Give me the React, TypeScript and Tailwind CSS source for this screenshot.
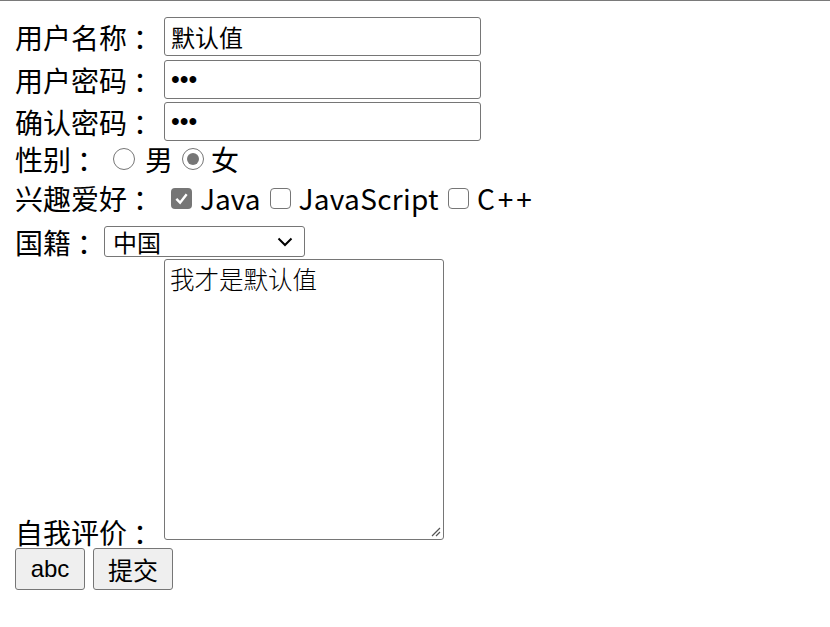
import React from 'react';

const cjk = '"Noto Sans CJK SC", "Noto Sans", sans-serif';

function Radio({ checked }: { checked?: boolean }) {
  return (
    <span className="w-[22px] h-[22px] rounded-full border-[1.5px] border-[#767676] bg-white flex items-center justify-center shrink-0">
      {checked && <span className="w-[12px] h-[12px] rounded-full bg-[#767676]" />}
    </span>
  );
}

function Check({ checked }: { checked?: boolean }) {
  return checked ? (
    <span className="w-[21px] h-[21px] rounded-[4px] bg-[#767676] flex items-center justify-center shrink-0">
      <svg width="15" height="15" viewBox="0 0 16 16">
        <path d="M2.5 8.5 L6.5 12.5 L13.5 3.5" fill="none" stroke="white" strokeWidth="2.6" />
      </svg>
    </span>
  ) : (
    <span className="block w-[21px] h-[21px] rounded-[4px] border-[1.5px] border-[#767676] bg-white shrink-0" />
  );
}

// 冒号在思源黑体里偏左，补一点距离
const Colon = () => <span className="ml-[6px]">：</span>;

export default function App() {
  return (
    <div className="w-[830px] h-[627px] bg-white text-black overflow-hidden" style={{ fontFamily: cjk }}>
      <div className="h-px bg-[#7a7a7a]" />
      <form className="pl-[15px] flex flex-col text-[28px] leading-none">
        {/* 用户名称 */}
        <div className="mt-[16px] flex items-center h-[39px]">
          <label className="w-[149px] shrink-0 whitespace-nowrap">用户名称<Colon /></label>
          <input
            type="text"
            defaultValue="默认值"
            className="w-[317px] h-[39px] border border-[#767676] rounded-[3px] pl-[6px] text-[24px] outline-none"
            style={{ fontFamily: cjk }}
          />
        </div>
        {/* 用户密码 */}
        <div className="mt-[4px] flex items-center h-[39px]">
          <label className="w-[149px] shrink-0 whitespace-nowrap">用户密码<Colon /></label>
          <input
            type="password"
            defaultValue="123"
            className="w-[317px] h-[39px] border border-[#767676] rounded-[3px] pl-[6px] text-[25px] outline-none"
            style={{ fontFamily: '"Liberation Sans", sans-serif' }}
          />
        </div>
        {/* 确认密码 */}
        <div className="mt-[3px] flex items-center h-[39px]">
          <label className="w-[149px] shrink-0 whitespace-nowrap">确认密码<Colon /></label>
          <input
            type="password"
            defaultValue="123"
            className="w-[317px] h-[39px] border border-[#767676] rounded-[3px] pl-[6px] text-[25px] outline-none"
            style={{ fontFamily: '"Liberation Sans", sans-serif' }}
          />
        </div>
        {/* 性别 */}
        <div className="flex items-center h-[36px]">
          <span className="w-[98px] shrink-0 whitespace-nowrap">性别<Colon /></span>
          <Radio />
          <span className="ml-[10px]">男</span>
          <span className="ml-[9px]"><Radio checked /></span>
          <span className="ml-[7px]">女</span>
        </div>
        {/* 兴趣爱好 */}
        <div className="flex items-center h-[42px]">
          <span className="w-[156px] shrink-0 whitespace-nowrap">兴趣爱好<Colon /></span>
          <Check checked />
          <span className="ml-[8px]">Java</span>
          <span className="ml-[10px]"><Check /></span>
          <span className="ml-[7px] tracking-[0.3px]">JavaScript</span>
          <span className="ml-[9px]"><Check /></span>
          <span className="ml-[8px] tracking-[3px]">C++</span>
        </div>
        {/* 国籍 */}
        <div className="mt-[7px] flex items-center h-[31px]">
          <span className="w-[89px] shrink-0 whitespace-nowrap">国籍<Colon /></span>
          <div className="w-[201px] h-[31px] border border-[#767676] rounded-[3px] flex items-center justify-between pl-[8px] pr-[11px] text-[24px]">
            <span>中国</span>
            <svg width="16" height="10" viewBox="0 0 16 10">
              <path d="M1.5 1.5 L8 8 L14.5 1.5" fill="none" stroke="black" strokeWidth="2" />
            </svg>
          </div>
        </div>
        {/* 自我评价 */}
        <div className="mt-[2px] flex items-end">
          <span className="w-[149px] shrink-0 whitespace-nowrap mb-[-6px]">自我评价<Colon /></span>
          <div className="relative">
            <textarea
              defaultValue="我才是默认值"
              className="block w-[280px] h-[281px] border border-[#767676] rounded-[3px] px-[5px] py-[4px] text-[24.5px] font-light text-black leading-[30px] outline-none resize-none"
              style={{ fontFamily: cjk }}
            />
            <svg className="absolute right-[3px] bottom-[3px]" width="10" height="10" viewBox="0 0 10 10">
              <path d="M9 1 L1 9 M9 5 L5 9" stroke="#555" strokeWidth="1.2" />
            </svg>
          </div>
        </div>
        {/* 按钮 */}
        <div className="mt-[8px] flex gap-[8px]">
          <button
            type="button"
            className="w-[70px] h-[42px] bg-[#efefef] border border-[#767676] rounded-[3px] text-[24px]"
            style={{ fontFamily: '"Liberation Sans", sans-serif' }}
          >
            abc
          </button>
          <button
            type="submit"
            className="w-[80px] h-[42px] bg-[#efefef] border border-[#767676] rounded-[3px] text-[25px]"
            style={{ fontFamily: cjk }}
          >
            提交
          </button>
        </div>
      </form>
    </div>
  );
}
